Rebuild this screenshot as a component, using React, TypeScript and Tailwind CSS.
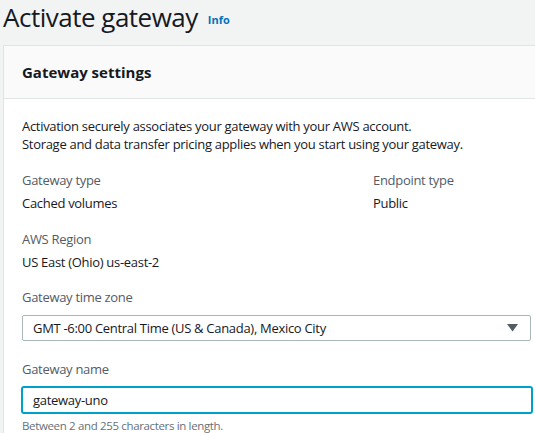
import React from "react";

export default function App() {
  const font = { fontFamily: '"Open Sans", "Noto Sans", Arial, sans-serif' };
  return (
    <div
      className="w-[535px] h-[433px] overflow-hidden bg-[#f2f3f3] text-[#16191f]"
      style={font}
    >
      <div className="flex items-end h-[36px] pl-[3px] -mt-[2px]">
        <h1 className="text-[26px] leading-[34px] font-normal tracking-[-0.5px] text-[#16191f]">
          Activate gateway
        </h1>
        <span className="ml-[10px] mb-[7px] text-[11px] font-bold text-[#0073bb] leading-[14px]">
          Info
        </span>
      </div>
      <div className="ml-[3px] mt-[11px] w-[560px] border-l border-t border-[#e1e4e4] bg-white">
        <div className="h-[53px] flex items-center px-[18px] bg-[#fafafa] border-b border-[#e1e4e4]">
          <h2 className="text-[15px] font-bold leading-[20px] text-[#16191f]">
            Gateway settings
          </h2>
        </div>
        <div className="pl-[18px] pt-[18px] text-[13px] tracking-[-0.3px] leading-[18px]">
          <p>Activation securely associates your gateway with your AWS account.</p>
          <p>Storage and data transfer pricing applies when you start using your gateway.</p>

          <div className="flex mt-[18px]">
            <div className="w-[351px]">
              <div className="text-[#545b64]">Gateway type</div>
              <div className="mt-[5px]">Cached volumes</div>
            </div>
            <div>
              <div className="text-[#545b64]">Endpoint type</div>
              <div className="mt-[5px]">Public</div>
            </div>
          </div>

          <div className="mt-[18px]">
            <div className="text-[#545b64]">AWS Region</div>
            <div className="mt-[5px]">US East (Ohio) us-east-2</div>
          </div>

          <div className="mt-[17px] text-[#545b64]">Gateway time zone</div>
          <div className="mt-[9px] w-[509px] h-[26px] border border-[#aab7b8] rounded-[2px] flex items-center pl-[10px] pr-[12px] bg-white">
            <span className="flex-1">GMT -6:00 Central Time (US &amp; Canada), Mexico City</span>
            <svg width="11" height="8" viewBox="0 0 11 8">
              <path d="M0 0 H11 L5.5 7.5 Z" fill="#545b64" />
            </svg>
          </div>

          <div className="mt-[19px] text-[#545b64]">Gateway name</div>
          <div className="mt-[8px] -ml-[1px] w-[512px] h-[28px] border-2 border-[#00a1c9] rounded-[3px] flex items-center pl-[10px] bg-white">
            gateway-uno
          </div>
          <div className="mt-[4px] text-[11.5px] tracking-[-0.35px] leading-[16px] text-[#687078]">
            Between 2 and 255 characters in length.
          </div>
        </div>
      </div>
    </div>
  );
}
